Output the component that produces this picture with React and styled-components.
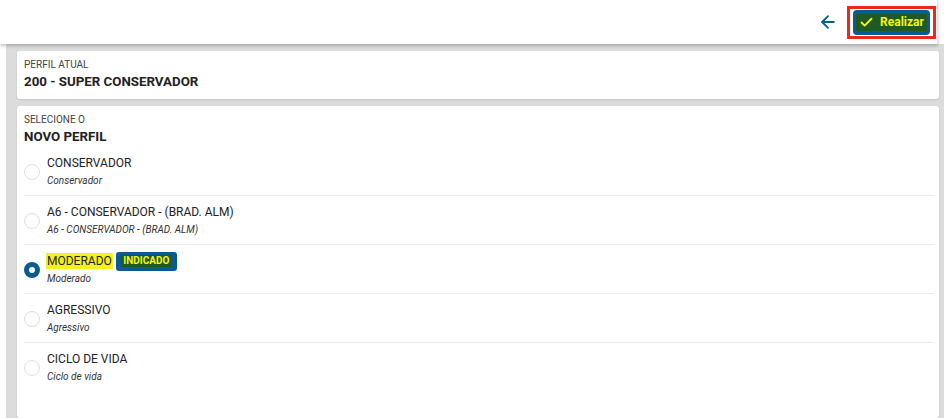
import React, { useState } from 'react';
import styled, { createGlobalStyle } from 'styled-components';
import { ArrowLeft, Check } from 'lucide-react';

const Global = createGlobalStyle`
  html, body { margin: 0; padding: 0; background: #fff; }
  body { font-family: Roboto, "Liberation Sans", sans-serif; color: #222; overflow: hidden; }
`;

const BLUE = '#0b5c8e';

const Page = styled.div`
  width: 944px;
  height: 418px;
  display: flex;
  flex-direction: column;
`;

const TopBar = styled.header`
  width: 938px;
  height: 44px;
  display: flex;
  align-items: center;
  justify-content: flex-end;
  gap: 9px;
  padding-right: 1px;
  box-sizing: border-box;
  border-right: 1px solid #e2e2e2;
  box-shadow: 0 2px 3px rgba(0, 0, 0, 0.22);
  position: relative;
  z-index: 1;
  background: #fff;
`;

const BackButton = styled.button`
  background: none;
  border: none;
  padding: 0;
  color: ${BLUE};
  display: flex;
  align-items: center;
  cursor: pointer;
`;

const Marked = styled.div`
  border: 3px solid #ec2a1c;
  padding: 1px 3px;
  display: flex;
`;

const PrimaryButton = styled.button`
  height: 25px;
  width: 77px;
  border: none;
  border-radius: 4px;
  background: ${BLUE};
  display: flex;
  align-items: center;
  justify-content: center;
  padding: 0 4px;
  cursor: pointer;
`;

const Highlight = styled.span`
  display: inline-flex;
  align-items: center;
  gap: 6px;
  background: #1f5a23;
  color: #f3f51b;
  font-weight: 700;
  font-size: ${p => p.$size || 12}px;
  line-height: ${p => p.$line || 17}px;
  padding: 0 ${p => p.$pad ?? 3}px;
  font-family: Roboto, "Liberation Sans", sans-serif;
`;

const Content = styled.main`
  flex: 1;
  margin-left: 6px;
  background: #dcdcdc;
  padding: 7px 5px 0 11px;
  display: flex;
  flex-direction: column;
  gap: 7px;
`;

const Card = styled.section`
  background: #fff;
  border-radius: 3px;
  padding: 8px 5px 7px 7px;
  box-shadow: 0 1px 2px rgba(0, 0, 0, 0.12);
  flex: ${p => (p.$grow ? 1 : 'none')};
`;

const Label = styled.div`
  font-size: 10px;
  line-height: 12px;
  color: #444;
  text-transform: uppercase;
`;

const Heading = styled.div`
  font-size: 13.3px;
  line-height: 20px;
  margin-top: 1px;
  font-weight: 700;
  color: #222;
`;

const Option = styled.label`
  display: flex;
  align-items: center;
  gap: 7px;
  padding: 8px 0 6px;
  border-bottom: ${p => (p.$last ? 'none' : '1px solid #ececec')};
  cursor: pointer;
`;

const Radio = styled.span`
  width: 16px;
  height: 16px;
  border-radius: 50%;
  box-sizing: border-box;
  border: ${p => (p.$checked ? `5px solid ${BLUE}` : '1.5px solid #d9e0ea')};
  background: #fff;
  flex: none;
`;

const OptionText = styled.div`
  display: flex;
  flex-direction: column;
  gap: 2px;
`;

const OptionTitle = styled.div`
  display: flex;
  align-items: center;
  gap: 3px;
  height: 16px;
  font-size: 12px;
  line-height: 16px;
  color: #222;
`;

const TitleMark = styled.span`
  background: ${p => (p.$on ? '#f4f21c' : 'transparent')};
  padding: 0 ${p => (p.$on ? 1 : 0)}px;
  margin-left: ${p => (p.$on ? -1 : 0)}px;
`;

const Badge = styled.span`
  background: ${BLUE};
  border-radius: 3px;
  height: 19px;
  width: 61px;
  display: inline-flex;
  align-items: center;
  justify-content: center;
`;

const OptionSub = styled.div`
  font-size: 10px;
  line-height: 16px;
  font-style: italic;
  color: #333;
`;

const options = [
  { id: 'cons', title: 'CONSERVADOR', sub: 'Conservador' },
  { id: 'a6', title: 'A6 - CONSERVADOR - (BRAD. ALM)', sub: 'A6 - CONSERVADOR - (BRAD. ALM)' },
  { id: 'mod', title: 'MODERADO', sub: 'Moderado', recommended: true },
  { id: 'agr', title: 'AGRESSIVO', sub: 'Agressivo' },
  { id: 'ciclo', title: 'CICLO DE VIDA', sub: 'Ciclo de vida' },
];

const App = () => {
  const [selected, setSelected] = useState('mod');

  return (
    <Page>
      <Global />
      <TopBar>
        <BackButton aria-label="Voltar">
          <ArrowLeft size={20} strokeWidth={2.2} />
        </BackButton>
        <Marked>
          <PrimaryButton>
            <Highlight>
              <Check size={15} strokeWidth={3} />
              Realizar
            </Highlight>
          </PrimaryButton>
        </Marked>
      </TopBar>

      <Content>
        <Card>
          <Label>Perfil atual</Label>
          <Heading>200 - SUPER CONSERVADOR</Heading>
        </Card>

        <Card $grow>
          <Label>Selecione o</Label>
          <Heading>NOVO PERFIL</Heading>
          {options.map((o, i) => (
            <Option key={o.id} $last={i === options.length - 1} onClick={() => setSelected(o.id)}>
              <Radio $checked={selected === o.id} />
              <OptionText>
                <OptionTitle>
                  <TitleMark $on={o.recommended}>{o.title}</TitleMark>
                  {o.recommended && (
                    <Badge>
                      <Highlight $size={10} $line={12} $pad={2}>INDICADO</Highlight>
                    </Badge>
                  )}
                </OptionTitle>
                <OptionSub>{o.sub}</OptionSub>
              </OptionText>
            </Option>
          ))}
        </Card>
      </Content>
    </Page>
  );
};

export default App;
